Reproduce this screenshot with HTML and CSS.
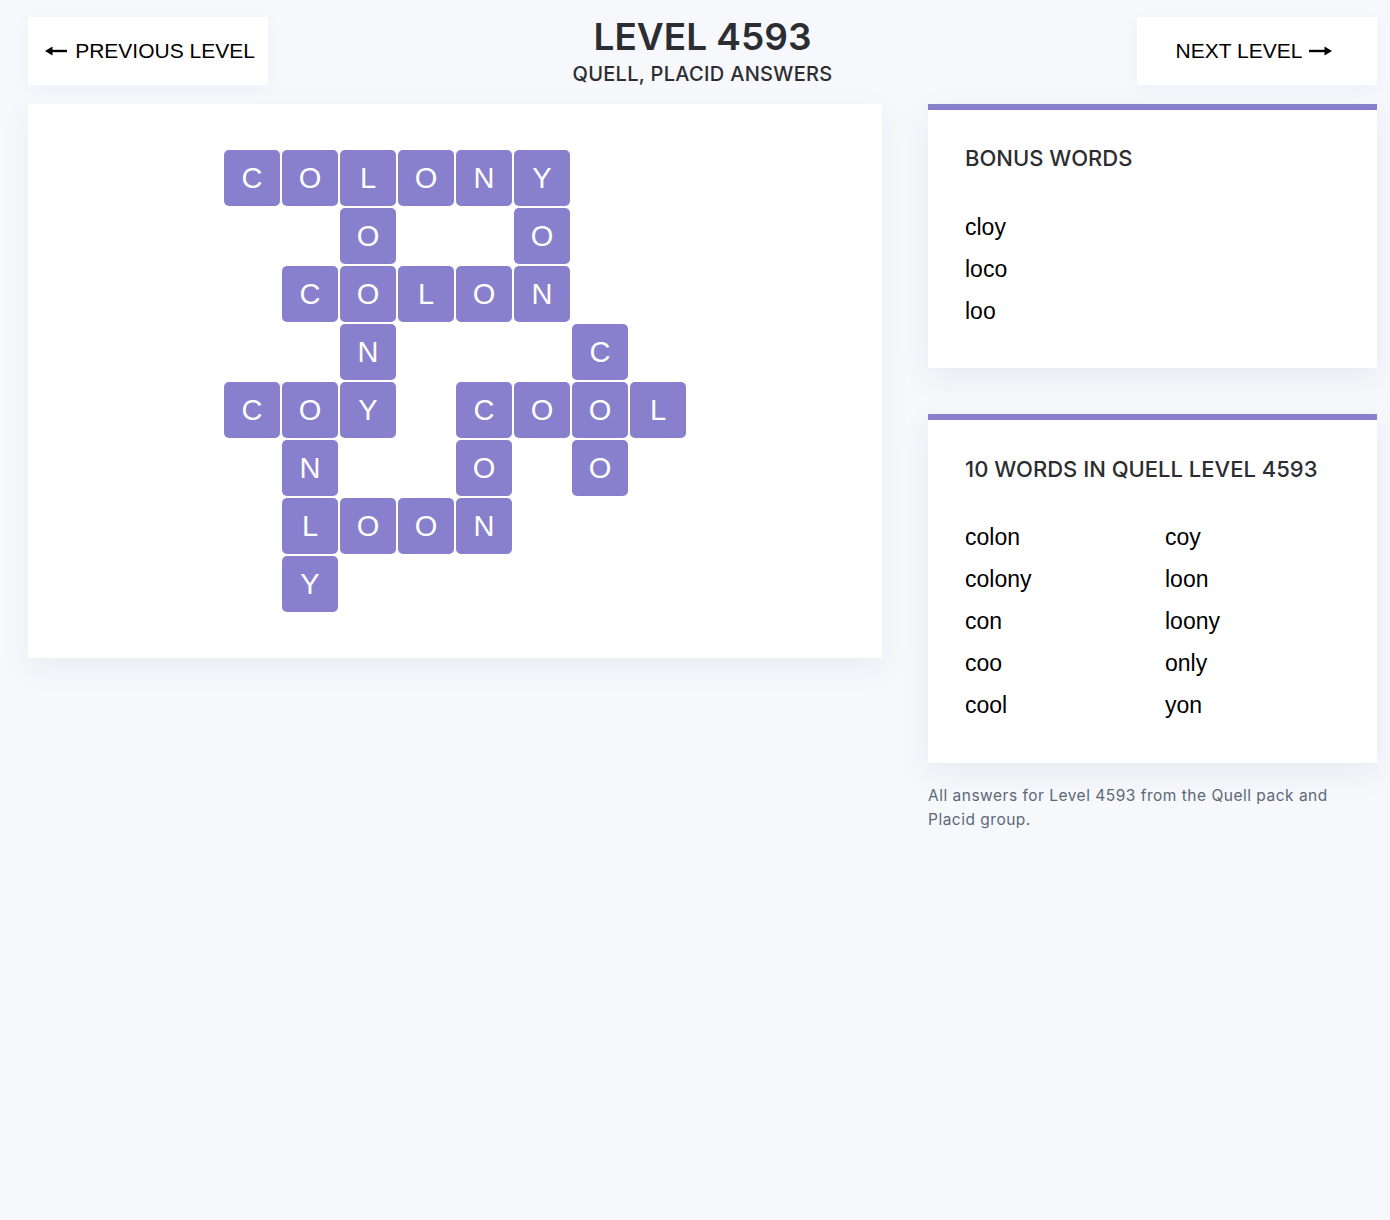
FILE: index.html
```html
<!DOCTYPE html>
<html lang="en">
<head>
<meta charset="utf-8">
<title>Level 4593 - Quell, Placid Answers</title>
<link rel="stylesheet" href="styles.css">
</head>
<body>
<div class="page">
  <header class="top">
    <a class="nav-btn prev" href="#">
      <svg class="arrow" width="23" height="12" viewBox="0 0 23 12"><path d="M22 6H6" stroke="#000" stroke-width="2.4"/><polygon points="0,6 7.5,1.5 7.5,10.5" fill="#000"/></svg>
      <span>PREVIOUS LEVEL</span>
    </a>
    <div class="title">
      <h1>LEVEL 4593</h1>
      <h2>QUELL, PLACID ANSWERS</h2>
    </div>
    <a class="nav-btn next" href="#">
      <span>NEXT LEVEL</span>
      <svg class="arrow" width="24" height="12" viewBox="0 0 24 12"><path d="M1 6H18" stroke="#000" stroke-width="2.4"/><polygon points="24,6 16.5,1.5 16.5,10.5" fill="#000"/></svg>
    </a>
  </header>

  <main class="main">
    <section class="board-card">
      <div class="board">
        <div class="t">C</div><div class="t">O</div><div class="t">L</div><div class="t">O</div><div class="t">N</div><div class="t">Y</div><div class="e"></div><div class="e"></div>
        <div class="e"></div><div class="e"></div><div class="t">O</div><div class="e"></div><div class="e"></div><div class="t">O</div><div class="e"></div><div class="e"></div>
        <div class="e"></div><div class="t">C</div><div class="t">O</div><div class="t">L</div><div class="t">O</div><div class="t">N</div><div class="e"></div><div class="e"></div>
        <div class="e"></div><div class="e"></div><div class="t">N</div><div class="e"></div><div class="e"></div><div class="e"></div><div class="t">C</div><div class="e"></div>
        <div class="t">C</div><div class="t">O</div><div class="t">Y</div><div class="e"></div><div class="t">C</div><div class="t">O</div><div class="t">O</div><div class="t">L</div>
        <div class="e"></div><div class="t">N</div><div class="e"></div><div class="e"></div><div class="t">O</div><div class="e"></div><div class="t">O</div><div class="e"></div>
        <div class="e"></div><div class="t">L</div><div class="t">O</div><div class="t">O</div><div class="t">N</div><div class="e"></div><div class="e"></div><div class="e"></div>
        <div class="e"></div><div class="t">Y</div><div class="e"></div><div class="e"></div><div class="e"></div><div class="e"></div><div class="e"></div><div class="e"></div>
      </div>
    </section>

    <aside class="side">
      <section class="card">
        <h3>BONUS WORDS</h3>
        <ul class="words">
          <li>cloy</li>
          <li>loco</li>
          <li>loo</li>
        </ul>
      </section>
      <section class="card">
        <h3>10 WORDS IN QUELL LEVEL 4593</h3>
        <ul class="words cols">
          <li>colon</li>
          <li>coy</li>
          <li>colony</li>
          <li>loon</li>
          <li>con</li>
          <li>loony</li>
          <li>coo</li>
          <li>only</li>
          <li>cool</li>
          <li>yon</li>
        </ul>
      </section>
      <p class="note">All answers for Level 4593 from the Quell pack and Placid group.</p>
    </aside>
  </main>
</div>
</body>
</html>
```

FILE: styles.css
```css
* { box-sizing: border-box; }

html, body {
  margin: 0;
  padding: 0;
  background: #f7f8fc;
}

body {
  font-family: Inter, "Liberation Sans", Arial, sans-serif;
  color: #2b2d31;
}

.page {
  padding: 17px 13px 40px 28px;
}

.top {
  display: flex;
  justify-content: space-between;
  align-items: flex-start;
  height: 68px;
  margin-bottom: 19px;
}

.nav-btn {
  width: 240px;
  height: 68px;
  background: #fff;
  display: flex;
  align-items: center;
  justify-content: center;
  gap: 7px;
  color: #000;
  text-decoration: none;
  font-family: "Liberation Sans", Arial, sans-serif;
  font-size: 21px;
  box-shadow: 0 4px 14px rgba(40, 50, 90, 0.04);
}

.nav-btn.prev { padding-left: 4px; }
.nav-btn.next { padding-right: 6px; gap: 6px; }

.arrow { display: block; }

.title {
  text-align: center;
  margin-top: -1px;
}

.title h1 {
  margin: 0;
  font-size: 37px;
  line-height: 42px;
  font-weight: 600;
  color: #2b2d31;
}

.title h2 {
  margin: 4px 0 0;
  font-size: 20px;
  line-height: 24px;
  font-weight: 500;
  color: #2b2d31;
  letter-spacing: 0.3px;
}

.main {
  display: flex;
  align-items: flex-start;
  gap: 46px;
}

.board-card {
  width: 854px;
  background: #fff;
  padding: 45px 0;
  box-shadow: 0 10px 30px rgba(40, 50, 90, 0.06);
}

.board {
  display: grid;
  grid-template-columns: repeat(8, 58px);
  grid-auto-rows: 58px;
  width: 464px;
  margin: 0 auto;
}

.t {
  margin: 1px;
  background: #8880cd;
  border-radius: 5px;
  color: #fff;
  display: flex;
  align-items: center;
  justify-content: center;
  font-family: "Liberation Sans", Arial, sans-serif;
  font-size: 29px;
}

.side {
  width: 449px;
  display: flex;
  flex-direction: column;
  gap: 46px;
}

.card {
  background: #fff;
  border-top: 6px solid #8880cd;
  padding: 36px 37px 36px;
  box-shadow: 0 10px 30px rgba(40, 50, 90, 0.07);
}

.card h3 {
  margin: 0 0 36px;
  font-size: 22px;
  line-height: 24px;
  font-weight: 500;
  color: #2b2d31;
}

.card + .card {
  padding: 37px 37px 37px;
}

.card + .card h3 {
  margin-bottom: 35px;
}

.words {
  list-style: none;
  margin: 0;
  padding: 0;
  font-family: "Liberation Sans", Arial, sans-serif;
  font-size: 23px;
  line-height: 42px;
  color: #000;
}

.words.cols {
  display: grid;
  grid-template-columns: 200px 1fr;
}

.note {
  margin: -25px 0 0;
  font-size: 15.5px;
  line-height: 24px;
  letter-spacing: 0.5px;
  color: #5b6878;
}
```
